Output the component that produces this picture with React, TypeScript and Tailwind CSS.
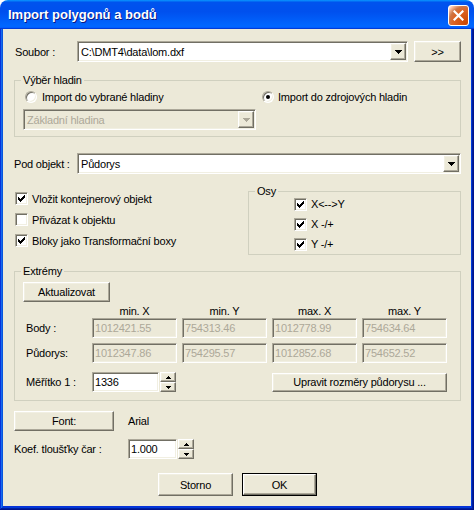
import React from "react";

const CHECK = [
  "......#",
  ".....##",
  "#...###",
  "##.###.",
  "#####..",
  ".###...",
  "..#....",
];

function CheckMark() {
  const rects: React.ReactElement[] = [];
  CHECK.forEach((row, y) => {
    row.split("").forEach((c, x) => {
      if (c === "#") rects.push(<rect key={`${x}-${y}`} x={x} y={y} width={1} height={1} fill="#000" />);
    });
  });
  return (
    <svg width="7" height="7" viewBox="0 0 7 7" shapeRendering="crispEdges">
      {rects}
    </svg>
  );
}

function Checkbox({ checked }: { checked: boolean }) {
  return (
    <div className="w-[13px] h-[13px] shrink-0 bg-white border border-t-[#ACA899] border-l-[#ACA899] border-b-white border-r-white shadow-[inset_1px_1px_0_#716F64,inset_-1px_-1px_0_#F1EFE2] flex items-center justify-center">
      {checked && <CheckMark />}
    </div>
  );
}

function Radio({ checked }: { checked: boolean }) {
  return (
    <div className="w-[12px] h-[12px] shrink-0 rounded-full bg-white border border-t-[#ACA899] border-l-[#ACA899] border-b-white border-r-white shadow-[inset_1px_1px_0_#716F64,inset_-1px_-1px_0_#F1EFE2] flex items-center justify-center">
      {checked && <div className="w-[4px] h-[4px] rounded-full bg-black" />}
    </div>
  );
}

function Btn({ className, children }: { className: string; children?: React.ReactNode }) {
  return (
    <div
      className={`shrink-0 flex items-center justify-center bg-[#ECE9D8] border border-t-white border-l-white border-b-[#716F64] border-r-[#716F64] shadow-[inset_-1px_-1px_0_#ACA899,inset_1px_1px_0_#F1EFE2] ${className}`}
    >
      {children}
    </div>
  );
}

function Arrow({ color }: { color: string }) {
  return (
    <svg width="7" height="4" viewBox="0 0 7 4" shapeRendering="crispEdges">
      <path d="M0 0h7v1h-1v1h-1v1h-1v1h-1v-1h-1v-1h-1v-1h-1z" fill={color} />
    </svg>
  );
}

function Combo({ className, text, disabled }: { className: string; text: string; disabled?: boolean }) {
  return (
    <div
      className={`shrink-0 flex p-[1px] border border-t-[#ACA899] border-l-[#ACA899] border-b-white border-r-white shadow-[inset_1px_1px_0_#716F64,inset_-1px_-1px_0_#F1EFE2] ${
        disabled ? "bg-[#ECE9D8] text-[#ACA899]" : "bg-white text-black"
      } ${className}`}
    >
      <div className="flex-1 flex items-center pl-[2px] whitespace-nowrap overflow-hidden">{text}</div>
      <Btn className="w-[16px] h-full">
        <Arrow color={disabled ? "#ACA899" : "#000"} />
      </Btn>
    </div>
  );
}

function Field({ className, text, disabled }: { className: string; text: string; disabled?: boolean }) {
  return (
    <div
      className={`shrink-0 flex items-center pl-[2px] whitespace-nowrap border border-t-[#ACA899] border-l-[#ACA899] border-b-white border-r-white shadow-[inset_1px_1px_0_#716F64,inset_-1px_-1px_0_#F1EFE2] ${
        disabled ? "bg-[#ECE9D8] text-[#ACA899]" : "bg-white text-black"
      } ${className}`}
    >
      {text}
    </div>
  );
}

function SmallArrow({ up }: { up?: boolean }) {
  return (
    <svg width="5" height="3" viewBox="0 0 5 3" shapeRendering="crispEdges">
      {up ? (
        <path d="M2 0h1v1h1v1h1v1h-5v-1h1v-1h1z" fill="#000" />
      ) : (
        <path d="M0 0h5v1h-1v1h-1v1h-1v-1h-1v-1h-1z" fill="#000" />
      )}
    </svg>
  );
}

function Spin({ className }: { className: string }) {
  return (
    <div className={`shrink-0 flex flex-col ${className}`}>
      <Btn className="w-full flex-1">
        <SmallArrow up />
      </Btn>
      <Btn className="w-full flex-1">
        <SmallArrow />
      </Btn>
    </div>
  );
}

export default function App() {
  return (
    <div className="w-[474px] h-[510px] bg-white font-['Liberation_Sans',Arial,sans-serif] text-[11px] leading-[14px] text-black flex flex-col select-none">
      {/* Title bar */}
      <div className="h-[29px] shrink-0 rounded-t-[8px] bg-[linear-gradient(180deg,#0997ff,#0053ee_8%,#0050ee_40%,#0066ff_88%,#0066ff_93%,#005bff_95%,#003dd7_96%,#003dd7)] flex items-start pl-[8px] pr-[5px]">
        <span className="flex-1 mt-[7px] text-white font-bold text-[13px] leading-[15px] [text-shadow:1px_1px_0_#0a1883]">
          Import polygonů a bodů
        </span>
        <div className="mt-[5px] w-[21px] h-[21px] rounded-[3px] border border-white bg-[radial-gradient(circle_at_90%_90%,#cc4600_0%,#dc6527_55%,#cd7546_70%,#ffccb2_90%,#ffffff_100%)] flex items-center justify-center">
          <svg width="11" height="11" viewBox="0 0 11 11">
            <path d="M1.5 1.5 L9.5 9.5 M9.5 1.5 L1.5 9.5" stroke="#fff" strokeWidth="2.2" strokeLinecap="square" />
          </svg>
        </div>
      </div>

      {/* Frame */}
      <div className="flex-1 bg-[#0831d9] px-[3px] pb-[4px] shadow-[inset_-1px_-1px_#00138c,inset_1px_0_#0831d9,inset_-2px_-2px_#001ea0,inset_2px_0_#166aee,inset_-3px_-3px_#003bda,inset_3px_0_#0855dd]">
        <div className="h-full bg-[#ECE9D8] flex flex-col pl-[11px] tracking-[-0.2px]">
          {/* Soubor */}
          <div className="mt-[12px] flex items-center h-[21px]">
            <span className="ml-[1px] w-[62px]">Soubor :</span>
            <Combo className="w-[331px] h-[21px]" text={"C:\\DMT4\\data\\lom.dxf"} />
            <Btn className="ml-[6px] w-[47px] h-[21px]">&gt;&gt;</Btn>
          </div>

          {/* Výběr hladin */}
          <fieldset className="mt-[11px] w-[447px] border border-[#D0D0BF] pb-[6px]">
            <legend className="ml-[6px] px-[2px] leading-[14px]">Výběr hladin</legend>
            <div className="mt-[3px] h-[14px] flex items-center pl-[10px]">
              <div className="w-[237px] flex items-center">
                <Radio checked={false} />
                <span className="ml-[5px]">Import do vybrané hladiny</span>
              </div>
              <div className="flex items-center">
                <Radio checked />
                <span className="ml-[4px]">Import do zdrojových hladin</span>
              </div>
            </div>
            <Combo className="mt-[5px] ml-[8px] w-[233px] h-[21px]" text="Základní hladina" disabled />
          </fieldset>

          {/* Pod objekt */}
          <div className="mt-[16px] flex items-center h-[21px]">
            <span className="w-[63px]">Pod objekt :</span>
            <Combo className="w-[384px] h-[21px]" text="Půdorys" />
          </div>

          {/* Checkboxes + Osy */}
          <div className="mt-[10px] flex">
            <div className="w-[234px] pt-[4px] flex flex-col">
              {[
                ["Vložit kontejnerový objekt", true],
                ["Přivázat k objektu", false],
                ["Bloky jako Transformační boxy", true],
              ].map(([t, c]) => (
                <div key={t as string} className="h-[21px] flex items-center pl-[1px]">
                  <Checkbox checked={c as boolean} />
                  <span className="ml-[4px]">{t as string}</span>
                </div>
              ))}
            </div>
            <fieldset className="w-[213px] h-[71px] border border-[#D0D0BF]">
              <legend className="ml-[6px] px-[2px] leading-[14px]">Osy</legend>
              <div className="-mt-[1px] flex flex-col gap-[6px] pl-[45px]">
                {["X<-->Y", "X -/+", "Y -/+"].map((t) => (
                  <div key={t} className="h-[14px] flex items-center">
                    <Checkbox checked />
                    <span className="ml-[4px]">{t}</span>
                  </div>
                ))}
              </div>
            </fieldset>
          </div>

          {/* Extrémy */}
          <fieldset className="mt-[9px] w-[447px] h-[137px] border border-[#D0D0BF]">
            <legend className="ml-[6px] px-[2px] leading-[14px]">Extrémy</legend>
            <Btn className="mt-[4px] ml-[8px] w-[87px] h-[20px]">Aktualizovat</Btn>
            <div className="mt-[3px] h-[13px] flex leading-[13px]">
              <div className="w-[77px]" />
              <div className="flex gap-[5px]">
                {["min. X", "min. Y", "max. X", "max. Y"].map((h) => (
                  <div key={h} className="w-[85px] text-center">
                    {h}
                  </div>
                ))}
              </div>
            </div>
            {[
              ["Body :", ["1012421.55", "754313.46", "1012778.99", "754634.64"]],
              ["Půdorys:", ["1012347.86", "754295.57", "1012852.68", "754652.52"]],
            ].map(([label, vals], i) => (
              <div key={label as string} className={`flex items-center h-[20px] ${i === 1 ? "mt-[5px]" : ""}`}>
                <span className="ml-[11px] w-[66px]">{label as string}</span>
                <div className="flex gap-[5px]">
                  {(vals as string[]).map((v) => (
                    <Field key={v} className="w-[85px] h-[20px]" text={v} disabled />
                  ))}
                </div>
              </div>
            ))}
            <div className="mt-[9px] flex items-center h-[20px]">
              <span className="ml-[11px] w-[66px]">Měřítko 1 :</span>
              <Field className="w-[67px] h-[20px]" text="1336" />
              <Spin className="ml-[1px] w-[16px] h-[20px]" />
              <Btn className="ml-[96px] w-[175px] h-[19px]">Upravit rozměry půdorysu ...</Btn>
            </div>
          </fieldset>

          {/* Font */}
          <div className="mt-[10px] flex items-center h-[20px]">
            <Btn className="w-[100px] h-[20px]">Font:</Btn>
            <span className="ml-[14px]">Arial</span>
          </div>

          {/* Koef */}
          <div className="mt-[8px] flex items-center h-[20px]">
            <span className="w-[114px]">Koef. tloušťky čar :</span>
            <Field className="w-[49px] h-[20px]" text="1.000" />
            <Spin className="ml-[1px] w-[16px] h-[20px]" />
          </div>

          {/* Buttons */}
          <div className="mt-[14px] flex">
            <Btn className="ml-[144px] w-[75px] h-[23px]">Storno</Btn>
            <div className="ml-[9px] w-[75px] h-[23px] border border-black flex">
              <Btn className="w-full h-full">OK</Btn>
            </div>
          </div>
        </div>
      </div>
    </div>
  );
}
